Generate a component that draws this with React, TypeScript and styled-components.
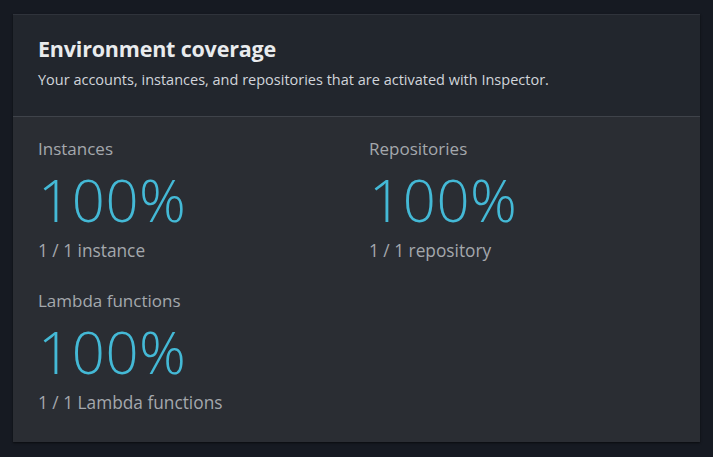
import React from "react";
import styled, { createGlobalStyle } from "styled-components";

const GlobalStyle = createGlobalStyle`
  html, body { margin: 0; padding: 0; background: #161a22; }
  body { font-family: "Open Sans", "Noto Sans", sans-serif; }
`;

const Page = styled.div`
  padding: 14px 13px 15px 13px;
  background: #161a22;
  min-height: 457px;
  box-sizing: border-box;
`;

const Card = styled.section`
  width: 687px;
  height: 428px;
  background: #2a2d33;
  box-shadow: 0 1px 2px rgba(0, 0, 0, 0.6);
  display: flex;
  flex-direction: column;
  border-top: 1px solid #2f333b;
  box-sizing: border-box;
`;

const Header = styled.header`
  background: #22262d;
  height: 102px;
  flex: none;
  padding: 19px 25px 0 25px;
  box-sizing: border-box;
  border-bottom: 1px solid #3f434a;
`;

const Title = styled.h2`
  margin: 0;
  font-size: 21.5px;
  line-height: 30px;
  font-weight: 700;
  color: #e9ebed;
  letter-spacing: -0.2px;
`;

const Subtitle = styled.p`
  margin: 6px 0 0 0;
  font-size: 14.5px;
  line-height: 20px;
  color: #d1d5db;
`;

const Grid = styled.div`
  display: grid;
  grid-template-columns: 306px 306px;
  column-gap: 25px;
  padding: 20px 25px 0 25px;
`;

const Metric = styled.div`
  display: flex;
  flex-direction: column;
  height: 152px;
`;

const Label = styled.div`
  font-size: 17px;
  line-height: 24px;
  color: #a4a8ad;
`;

const Value = styled.div`
  font-size: 58px;
  font-weight: 300;
  line-height: 64px;
  color: #44b9d6;
  margin-top: 7px;
  letter-spacing: 0.6px;
`;

const Detail = styled.div`
  font-size: 17.3px;
  line-height: 24px;
  color: #a4a8ad;
  margin-top: 7px;
`;

const metrics = [
  { label: "Instances", value: "100%", detail: "1 / 1 instance" },
  { label: "Repositories", value: "100%", detail: "1 / 1 repository" },
  { label: "Lambda functions", value: "100%", detail: "1 / 1 Lambda functions" },
];

export default function App() {
  return (
    <>
      <GlobalStyle />
      <Page>
        <Card>
          <Header>
            <Title>Environment coverage</Title>
            <Subtitle>
              Your accounts, instances, and repositories that are activated with Inspector.
            </Subtitle>
          </Header>
          <Grid>
            {metrics.map((m) => (
              <Metric key={m.label}>
                <Label>{m.label}</Label>
                <Value>{m.value}</Value>
                <Detail>{m.detail}</Detail>
              </Metric>
            ))}
          </Grid>
        </Card>
      </Page>
    </>
  );
}
